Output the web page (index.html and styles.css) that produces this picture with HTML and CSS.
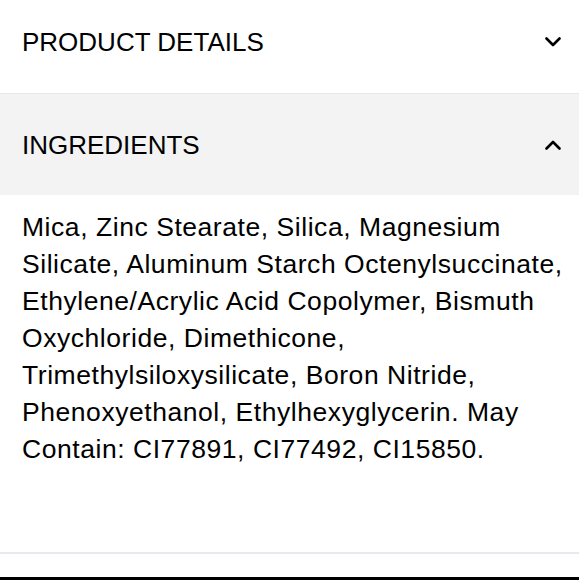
FILE: index.html
```html
<!DOCTYPE html>
<html>
<head>
<meta charset="utf-8">
<link rel="stylesheet" href="styles.css">
</head>
<body>
<div class="accordion">
  <div class="acc-head">
    <span class="acc-title">PRODUCT DETAILS</span>
    <svg class="chev" width="16" height="10" viewBox="0 0 16 10"><path d="M1.5 1.5 L8 8 L14.5 1.5" fill="none" stroke="#000" stroke-width="2.6" stroke-linecap="round" stroke-linejoin="round"/></svg>
  </div>
  <div class="acc-head open">
    <span class="acc-title">INGREDIENTS</span>
    <svg class="chev" width="16" height="10" viewBox="0 0 16 10"><path d="M1.5 8.5 L8 2 L14.5 8.5" fill="none" stroke="#000" stroke-width="2.6" stroke-linecap="round" stroke-linejoin="round"/></svg>
  </div>
  <div class="acc-body">
    <p>Mica, Zinc Stearate, Silica, Magnesium<br>Silicate, Aluminum Starch Octenylsuccinate,<br>Ethylene/Acrylic Acid Copolymer, Bismuth<br>Oxychloride, Dimethicone,<br>Trimethylsiloxysilicate, Boron Nitride,<br>Phenoxyethanol, Ethylhexyglycerin. May<br>Contain: CI77891, CI77492, CI15850.</p>
  </div>
</div>
<div class="bottom-bar"></div>
</body>
</html>
```
FILE: styles.css
```css
html, body {
  margin: 0;
  padding: 0;
  background: #fff;
}
body {
  width: 579px;
  height: 580px;
  overflow: hidden;
  display: flex;
  flex-direction: column;
  font-family: "Liberation Sans", Arial, sans-serif;
  color: #000;
}
.accordion {
  flex: 1;
  display: flex;
  flex-direction: column;
}
.acc-head {
  height: 94px;
  box-sizing: border-box;
  display: flex;
  align-items: center;
  justify-content: space-between;
  padding: 0 18px 10px 22px;
  border-bottom: 1px solid #e4e7ee;
}
.acc-head.open {
  height: 101px;
  padding-bottom: 0;
  background: #f3f3f3;
  border-bottom: none;
}
.acc-title {
  font-size: 26px;
  padding-top: 2px;
}
.chev {
  display: block;
}
.acc-body {
  height: 357px;
  padding: 0 0 0 22px;
  border-bottom: 2px solid #e6eaef;
}
.acc-body p {
  margin: 14px 0 0;
  font-size: 26.5px;
  line-height: 37px;
  letter-spacing: 0.55px;
  white-space: nowrap;
}
.bottom-bar {
  height: 23px;
  border-bottom: 3px solid #000;
  box-sizing: border-box;
}
```
